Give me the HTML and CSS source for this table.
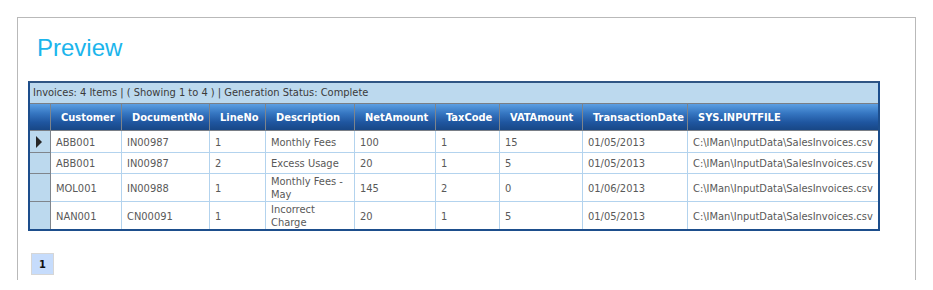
FILE: index.html
```html
<!DOCTYPE html>
<html>
<head>
<meta charset="utf-8">
<title>Preview</title>
<link rel="stylesheet" href="styles.css">
</head>
<body>
<div class="panel">
  <h1 class="title">Preview</h1>
  <div class="grid">
    <div class="grid-status">Invoices: 4 Items | ( Showing 1 to 4 ) | Generation Status: Complete</div>
    <table class="grid-table">
      <thead>
        <tr>
          <th class="ind w-ind"></th>
          <th class="w-cust">Customer</th>
          <th class="w-doc">DocumentNo</th>
          <th class="w-line">LineNo</th>
          <th class="w-desc">Description</th>
          <th class="w-net">NetAmount</th>
          <th class="w-tax">TaxCode</th>
          <th class="w-vat">VATAmount</th>
          <th class="w-date">TransactionDate</th>
          <th class="w-file last">SYS.INPUTFILE</th>
        </tr>
      </thead>
      <tbody>
        <tr class="first">
          <td class="ind"><span class="arrow"></span></td>
          <td>ABB001</td><td>IN00987</td><td>1</td><td>Monthly Fees</td><td>100</td><td>1</td><td>15</td><td>01/05/2013</td><td class="last">C:\IMan\InputData\SalesInvoices.csv</td>
        </tr>
        <tr>
          <td class="ind"></td>
          <td>ABB001</td><td>IN00987</td><td>2</td><td>Excess Usage</td><td>20</td><td>1</td><td>5</td><td>01/05/2013</td><td class="last">C:\IMan\InputData\SalesInvoices.csv</td>
        </tr>
        <tr>
          <td class="ind"></td>
          <td>MOL001</td><td>IN00988</td><td>1</td><td>Monthly Fees - May</td><td>145</td><td>2</td><td>0</td><td>01/06/2013</td><td class="last">C:\IMan\InputData\SalesInvoices.csv</td>
        </tr>
        <tr class="end">
          <td class="ind"></td>
          <td>NAN001</td><td>CN00091</td><td>1</td><td>Incorrect Charge</td><td>20</td><td>1</td><td>5</td><td>01/05/2013</td><td class="last">C:\IMan\InputData\SalesInvoices.csv</td>
        </tr>
      </tbody>
    </table>
  </div>
  <div class="pager"><span class="page-btn">1</span></div>
</div>
</body>
</html>
```
FILE: styles.css
```css
html, body {
  margin: 0;
  padding: 0;
  background: #ffffff;
}

body {
  font-family: "DejaVu Sans Condensed", "DejaVu Sans", sans-serif;
  font-stretch: condensed;
}

.panel {
  margin: 17px 0 0 17px;
  width: 899px;
  height: 263px;
  box-sizing: border-box;
  border: 1px solid #b9b9b9;
  border-bottom: none;
  padding: 0 0 0 10px;
}

.title {
  margin: 16px 0 19px 9px;
  font-family: "Liberation Sans", Arial, sans-serif;
  font-stretch: normal;
  font-weight: normal;
  font-size: 24px;
  line-height: 28px;
  color: #1bb5ec;
}

.grid {
  width: 852px;
  box-sizing: border-box;
  border: 2px solid #1d4e8c;
  border-top-color: #2f5583;
}

.grid-status {
  height: 20px;
  line-height: 20px;
  padding-left: 3px;
  background: #bcd9ee;
  color: #3a3a3a;
  font-size: 11px;
  white-space: nowrap;
}

.grid-table {
  width: 848px;
  table-layout: fixed;
  border-collapse: separate;
  border-spacing: 0;
  font-size: 11px;
}

.grid-table th {
  box-sizing: border-box;
  height: 28px;
  padding: 0 0 0 10px;
  text-align: left;
  vertical-align: middle;
  color: #ffffff;
  font-weight: bold;
  white-space: nowrap;
  overflow: hidden;
  background: linear-gradient(#5c9fe2 0%, #3677c2 35%, #1f56a0 70%, #184786 100%);
  border-top: 1px solid #7a7f86;
  border-right: 1px solid #7d848c;
  border-bottom: 1px solid #7a7f86;
}

.grid-table th.ind {
  padding: 0;
}

.grid-table th.last,
.grid-table td.last {
  border-right: none;
}

.w-ind { width: 21px; }
.w-cust { width: 71px; }
.w-doc { width: 88px; }
.w-line { width: 56px; }
.w-desc { width: 89px; }
.w-net { width: 81px; }
.w-tax { width: 64px; }
.w-vat { width: 83px; }
.w-date { width: 105px; }
.w-file { width: 190px; }

.grid-table td {
  box-sizing: border-box;
  height: 21px;
  padding: 1px 5px 0 5px;
  line-height: 13px;
  vertical-align: middle;
  color: #595959;
  background: #ffffff;
  border-right: 1px solid #b3d3ee;
  border-bottom: 1px solid #b3d3ee;
  overflow: hidden;
}

.grid-table td.last {
  white-space: nowrap;
  padding-left: 5px;
  padding-right: 0;
}

.grid-table tr.first td {
  height: 22px;
}

.grid-table tr.end td {
  border-bottom: none;
}

.grid-table td.ind {
  padding: 0 0 0 6px;
  background: #bcd9ee;
  border-right: 1px solid #7f858c;
  border-bottom: 1px solid #7f858c;
}

.grid-table tr.end td.ind {
  border-bottom: none;
}

.arrow {
  display: block;
  width: 0;
  height: 0;
  border-left: 6px solid #262626;
  border-top: 6px solid transparent;
  border-bottom: 6px solid transparent;
}

.pager {
  margin: 22px 0 0 3px;
  display: flex;
}

.page-btn {
  display: flex;
  align-items: center;
  justify-content: center;
  width: 23px;
  height: 22px;
  box-sizing: border-box;
  background: #c6dcfc;
  border: 1px solid #d6d6d6;
  color: #111111;
  font-weight: bold;
  font-size: 11px;
}
```
